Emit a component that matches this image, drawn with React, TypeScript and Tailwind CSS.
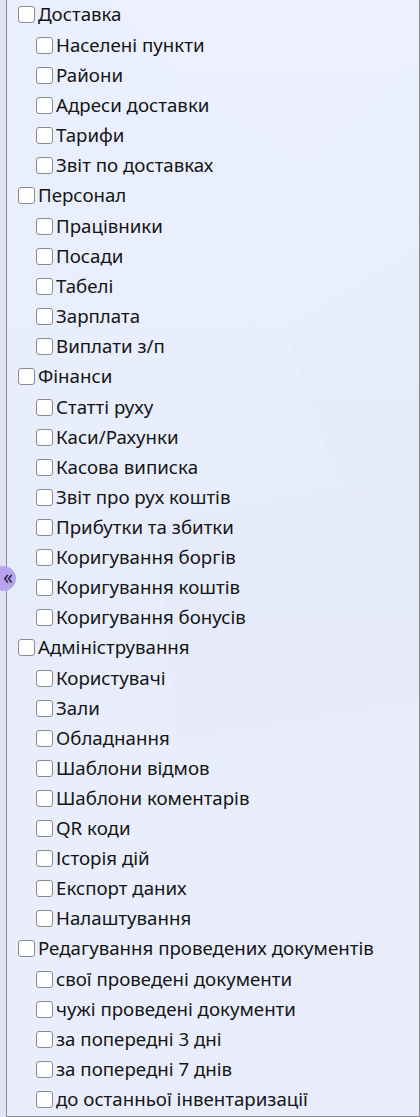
import React from "react";

type Group = { title: string; items: string[] };

const groups: Group[] = [
  {
    title: "Доставка",
    items: ["Населені пункти", "Райони", "Адреси доставки", "Тарифи", "Звіт по доставках"],
  },
  {
    title: "Персонал",
    items: ["Працівники", "Посади", "Табелі", "Зарплата", "Виплати з/п"],
  },
  {
    title: "Фінанси",
    items: [
      "Статті руху",
      "Каси/Рахунки",
      "Касова виписка",
      "Звіт про рух коштів",
      "Прибутки та збитки",
      "Коригування боргів",
      "Коригування коштів",
      "Коригування бонусів",
    ],
  },
  {
    title: "Адміністрування",
    items: [
      "Користувачі",
      "Зали",
      "Обладнання",
      "Шаблони відмов",
      "Шаблони коментарів",
      "QR коди",
      "Історія дій",
      "Експорт даних",
      "Налаштування",
    ],
  },
  {
    title: "Редагування проведених документів",
    items: [
      "свої проведені документи",
      "чужі проведені документи",
      "за попередні 3 дні",
      "за попередні 7 днів",
      "до останньої інвентаризації",
    ],
  },
];

function Row({ label }: { label: string }) {
  return (
    <label className="flex h-[30px] items-center gap-[3px] whitespace-nowrap">
      <span className="h-[17px] w-[17px] shrink-0 rounded-[3px] border border-[#8a8a8f] bg-white" />
      <span>{label}</span>
    </label>
  );
}

export default function App() {
  return (
    <div
      className="relative flex min-h-[1117px] w-[420px] bg-[#e2e2f7] text-[18.7px] text-[#151515]"
      style={{ fontFamily: '"Noto Sans", "Open Sans", sans-serif' }}
    >
      <div className="w-[6px] shrink-0" />
      <div className="relative flex-1 overflow-hidden border-b border-l border-r border-[#8c8c92] bg-gradient-to-b from-[#eaf0fd] via-[#e8edfc] to-[#e9edfb] pb-[2px]">
        {/* фонові полігони */}
        <svg className="pointer-events-none absolute inset-0 h-full w-full" viewBox="0 0 412 1115" preserveAspectRatio="none">
          <polygon points="100,0 412,0 412,60 300,160 180,90" fill="#eef2fe" opacity="0.5" />
          <polygon points="412,250 412,520 330,480 280,330" fill="#e4e9fb" opacity="0.5" />
          <polygon points="150,520 412,470 412,700 170,740" fill="#e4e8fb" opacity="0.45" />
          <polygon points="0,740 170,740 260,1000 0,1115" fill="#ecf0fd" opacity="0.45" />
          <polygon points="260,1000 412,900 412,1115 200,1115" fill="#e6eafb" opacity="0.45" />
        </svg>

        <div className="relative -mt-[1px] pl-[11px]">
          {groups.map((g) => (
            <div key={g.title}>
              <Row label={g.title} />
              <div className="pl-[18px] pt-[1px]">
                {g.items.map((it) => (
                  <Row key={it} label={it} />
                ))}
              </div>
            </div>
          ))}
        </div>
      </div>

      {/* кнопка згортання */}
      <button className="absolute left-[-9px] top-[566px] flex h-[25px] w-[25px] items-center justify-center rounded-full bg-[#b7a4f1] pl-[9px] pb-[2px] text-[19px] leading-none text-[#1d1d2a]">
        «
      </button>
    </div>
  );
}
